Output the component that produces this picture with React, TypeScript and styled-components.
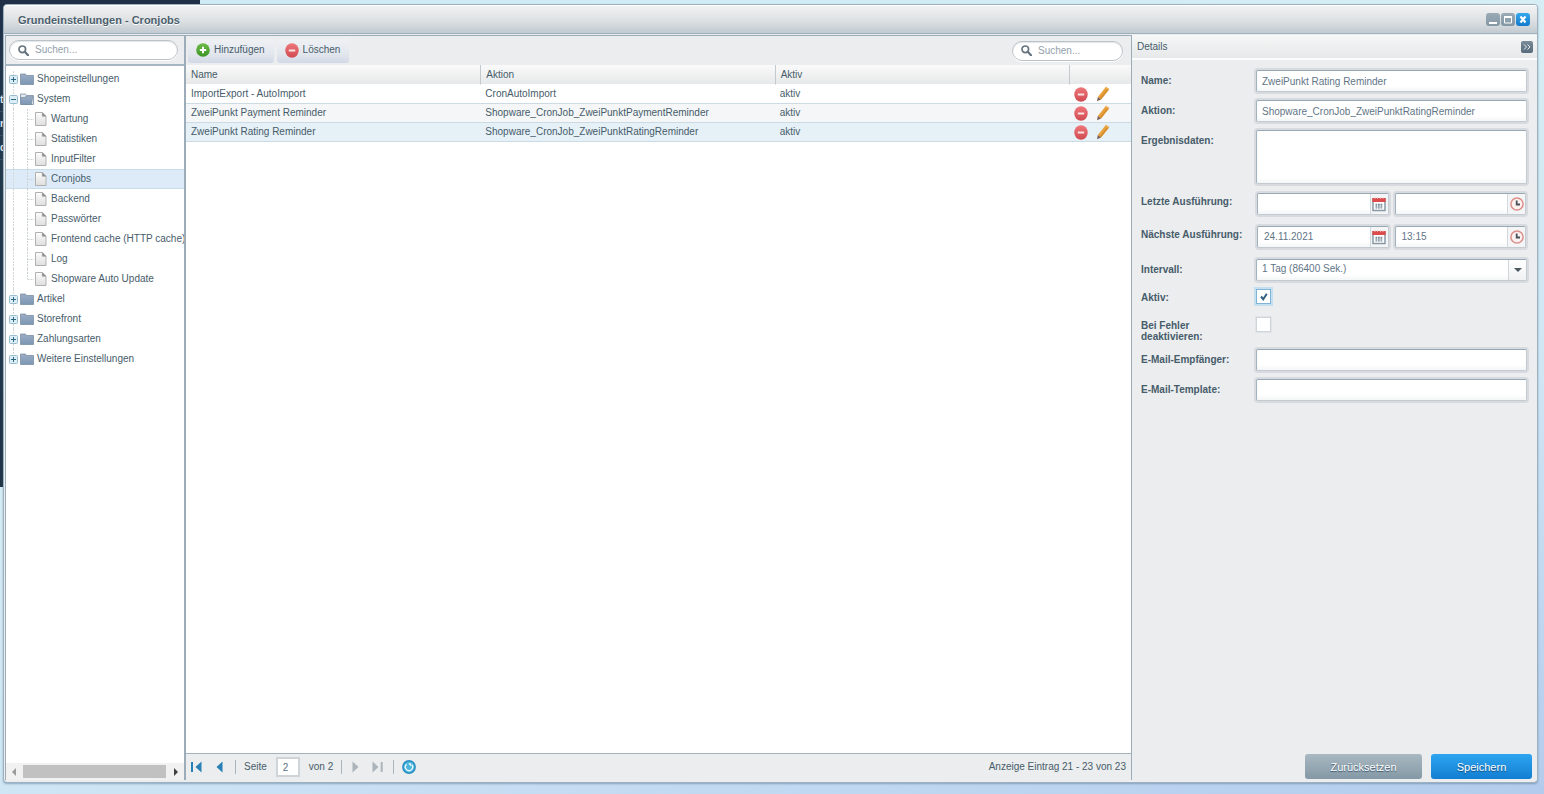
import React from 'react';
import styled, { createGlobalStyle, css } from 'styled-components';

const Global = createGlobalStyle`
  * { box-sizing: border-box; }
  html, body, #root { height: 100%; margin: 0; }
  body, button, input, select, textarea {
    font-family: "Liberation Sans", Arial, sans-serif;
    font-size: 10px;
    line-height: 12px;
    color: #475c6a;
  }
  button { border: 0; padding: 0; background: none; }
  svg { display: block; flex: none; }
`;

const Desktop = styled.div`
  position: relative;
  height: 100vh;
  padding: 4px 6px 11px 3px;
  overflow: hidden;
  background: linear-gradient(165deg, #cdeaf6 0%, #d6eef4 35%, #cfe6f5 65%, #b3cced 100%);
`;

const Backdrop = styled.div`
  position: absolute;
  top: 0;
  left: 0;
  width: 200px;
  height: 487px;
  padding-top: 88px;
  background: linear-gradient(#1e2f47, #22384c 30%, #1f3547);
`;

const BackdropItem = styled.div`
  width: 4px;
  height: 24px;
  overflow: hidden;
  border-bottom: 1px solid #3a4f62;
  font-weight: bold;
  line-height: 24px;
  color: #dfe7ee;
`;

const Window = styled.section`
  position: relative;
  display: flex;
  flex-direction: column;
  height: 100%;
  border: 1px solid #9cb0bf;
  border-radius: 4px;
  background: #ebedee;
  overflow: hidden;
  box-shadow: 0 1px 2px rgba(80, 110, 140, 0.5);
`;

const TitleBar = styled.header`
  display: flex;
  align-items: center;
  justify-content: space-between;
  flex: none;
  height: 29px;
  padding: 0 7px 0 14px;
  border-top: 1px solid #fff;
  border-bottom: 1px solid #9db0bd;
  background: linear-gradient(#f1f2f3, #dfe2e4 50%, #c2cbd1);
`;

const Title = styled.h1`
  margin: 0;
  font-size: 11px;
  line-height: 14px;
  color: #4c5f6c;
  text-shadow: 0 1px 0 #fff;
`;

const WindowTools = styled.div`
  display: flex;
  gap: 1px;
`;

const WindowButton = styled.button<{ $primary?: boolean }>`
  width: 14px;
  height: 13px;
  border-radius: 3px;
  background: ${(p) => (p.$primary ? 'linear-gradient(#35a8ec, #1279cc)' : 'linear-gradient(#9aabb7, #8497a4)')};
`;

const Body = styled.div`
  display: flex;
  flex: 1;
  min-height: 0;
  padding: 1px 0 2px 1px;
`;

const Sidebar = styled.aside`
  display: flex;
  flex-direction: column;
  flex: none;
  width: 181px;
  border: solid #9cadb9;
  border-width: 1px 2px 0 1px;
  background: #fff;
`;

const SidebarBar = styled.div`
  flex: none;
  height: 30px;
  padding: 4px 6px 0 3px;
  border-bottom: 2px solid #a5b7c3;
  background: #ebedee;
`;

const SearchBox = styled.label<{ $width?: number }>`
  display: flex;
  align-items: center;
  gap: 6px;
  width: ${(p) => (p.$width ? `${p.$width}px` : '100%')};
  height: 20px;
  padding: 0 8px;
  border: 1px solid #bcc3c8;
  border-radius: 10px;
  background: #fff;
  box-shadow: inset 0 1px 1px #e3e6e8, 0 1px 0 #fff;
`;

const SearchInput = styled.input`
  flex: 1;
  min-width: 0;
  padding: 0;
  border: 0;
  outline: 0;
  background: none;
  &::placeholder { color: #93a1ac; opacity: 1; }
`;

const Tree = styled.ul`
  flex: 1;
  min-height: 0;
  margin: 0;
  padding: 3px 0 0;
  list-style: none;
  overflow: hidden;
`;

const TreeRow = styled.li<{ $selected?: boolean }>`
  display: flex;
  align-items: center;
  height: 20px;
  padding-left: 2px;
  white-space: nowrap;
  ${(p) => p.$selected && css`
    background: #dcebf7;
    box-shadow: inset 0 1px 0 #c9dce9, inset 0 -1px 0 #c9dce9;
  `}
`;

const TreeText = styled.span`
  padding-left: 3px;
`;

const ScrollBar = styled.div`
  display: flex;
  align-items: center;
  justify-content: space-between;
  flex: none;
  height: 17px;
  padding: 0 5px;
  background: #f1f1f1;
`;

const ScrollThumb = styled.div`
  flex: 1;
  height: 13px;
  margin: 0 8px 0 7px;
  background: #c1c1c1;
`;

const Center = styled.main`
  display: flex;
  flex-direction: column;
  flex: 1;
  min-width: 0;
  border-top: 1px solid #9cadb9;
  background: #fff;
`;

const Toolbar = styled.div`
  display: flex;
  align-items: center;
  gap: 3px;
  flex: none;
  height: 29px;
  padding: 0 8px 0 2px;
  background: #ebedee;
`;

const ToolButton = styled.button`
  display: flex;
  align-items: center;
  gap: 4px;
  height: 24px;
  padding: 0 9px 1px 8px;
  border-radius: 3px;
  background: linear-gradient(#eff1f4, #e3e7ee 60%, #d2d9e6);
`;

const Spacer = styled.div`
  flex: 1;
`;

const Grid = styled.table`
  width: 100%;
  table-layout: fixed;
  border-collapse: separate;
  border-spacing: 0;
`;

const HeadCell = styled.th<{ $narrow?: boolean }>`
  height: 20px;
  width: ${(p) => (p.$narrow ? '62px' : 'auto')};
  padding: 1px 5px 0 5px;
  border-left: 1px solid #c3c9cd;
  border-bottom: 1px solid #fff;
  font-weight: normal;
  text-align: left;
  background: linear-gradient(#fafafa, #e7e8e9);
  &:first-child { border-left-color: transparent; padding-left: 4px; }
`;

const Cell = styled.td<{ $tone: string }>`
  height: 19px;
  padding: 0 5px;
  border-bottom: 1px solid #ccdae4;
  background: ${(p) => p.$tone};
`;

const RowActions = styled.div`
  display: flex;
  align-items: center;
  gap: 8px;
`;

const IconButton = styled.button`
  display: flex;
`;

const Pager = styled.footer`
  display: flex;
  align-items: center;
  flex: none;
  height: 27px;
  margin-top: auto;
  padding: 0 5px;
  border-top: 1px solid #a3b3be;
  background: #ebedee;
`;

const PagerGroup = styled.div<{ $gap: number }>`
  display: flex;
  align-items: center;
  gap: ${(p) => p.$gap}px;
  height: 14px;
  padding: 0 8px;
  border-left: 1px solid #a9b4bc;
  &:first-child { border-left: 0; padding: 0 12px 0 0; }
  &:nth-child(3) { padding: 0 10px; }
`;

const PageInput = styled.input`
  width: 24px;
  height: 20px;
  padding: 0 0 0 5px;
  border: 2px solid #cfd4d8;
  background: #fff;
  color: #5d7383;
`;

const Details = styled.aside`
  display: flex;
  flex-direction: column;
  flex: none;
  width: 406px;
  border-left: 1px solid #9cadb9;
  background: #ebedee;
`;

const DetailsHead = styled.div`
  display: flex;
  align-items: center;
  justify-content: space-between;
  flex: none;
  height: 25px;
  padding: 0 4px 0 5px;
  border-bottom: 2px solid #fbfcfc;
  background: linear-gradient(#f6f7f7, #e6e8e9);
`;

const DetailsTitle = styled.h2`
  margin: 0;
  font-size: 10px;
  font-weight: normal;
`;

const CollapseButton = styled.button`
  display: flex;
  align-items: center;
  justify-content: center;
  width: 12px;
  height: 12px;
  border-radius: 2px;
  background: linear-gradient(#7b8c99, #566b7b);
`;

const Form = styled.form`
  flex: 1;
  padding: 10px 10px 0 9px;
`;

const FormRow = styled.div<{ $height: number }>`
  display: grid;
  grid-template-columns: 115px 1fr;
  align-items: start;
  height: ${(p) => p.$height}px;
`;

const Label = styled.label<{ $compact?: boolean }>`
  padding-top: ${(p) => (p.$compact ? 3 : 5)}px;
  padding-right: 10px;
  font-weight: bold;
  line-height: 11px;
  white-space: pre-line;
`;

const field = css`
  border: 1px solid #c3cbd1;
  border-top-color: #98a9b5;
  border-left-color: #a3b3be;
  border-radius: 2px;
  background: #fff;
  box-shadow: 0 0 0 2px #d7dbdf, inset 0 -3px 3px #f5f7f8;
  color: #5f7586;
  outline: 0;
`;

const TextInput = styled.input`
  ${field}
  width: 100%;
  height: 22px;
  padding: 0 5px;
`;

const TextArea = styled.textarea`
  ${field}
  display: block;
  width: 100%;
  height: 54px;
  resize: none;
`;

const DateTime = styled.div`
  display: grid;
  grid-template-columns: 1fr 1fr;
  gap: 6px;
  padding: 0 1px;
`;

const Trigger = styled.div`
  ${field}
  display: flex;
  height: 22px;
  overflow: hidden;
`;

const TriggerInput = styled.input`
  flex: 1;
  min-width: 0;
  padding: 0 6px;
  border: 0;
  outline: 0;
  background: none;
  color: inherit;
`;

const TriggerButton = styled.button`
  display: flex;
  align-items: center;
  justify-content: center;
  width: 18px;
  border-left: 1px solid #d3d9dd;
  background: #f4f5f6;
`;

const SelectWrap = styled.div`
  position: relative;
`;

const Select = styled.select`
  ${field}
  appearance: none;
  display: block;
  width: 100%;
  height: 22px;
  padding: 0 24px 2px 5px;
`;

const SelectArrow = styled.span`
  position: absolute;
  top: 1px;
  right: 1px;
  display: flex;
  align-items: center;
  justify-content: center;
  width: 18px;
  height: 20px;
  border-left: 1px solid #cfd6da;
  background: linear-gradient(#fff, #eff1f2);
  pointer-events: none;
`;

const CheckWrap = styled.div`
  position: relative;
  width: 15px;
  height: 15px;
  svg {
    position: absolute;
    top: 4px;
    left: 4px;
    pointer-events: none;
  }
`;

const CheckInput = styled.input`
  appearance: none;
  display: block;
  width: 15px;
  height: 15px;
  margin: 0;
  border: 1px solid #cfd4d8;
  background: #fff;
  box-shadow: 0 0 0 1px #e1e4e6;
  &:checked {
    border-color: #80b3d6;
    box-shadow: 0 0 0 2px #c5def0;
  }
`;

const Actions = styled.div`
  display: flex;
  justify-content: flex-end;
  gap: 9px;
  padding: 0 5px 1px;
`;

const ActionButton = styled.button<{ $primary?: boolean }>`
  width: ${(p) => (p.$primary ? 101 : 117)}px;
  height: 25px;
  border-radius: 3px;
  font-size: 11px;
  color: #fff;
  text-shadow: 0 1px 1px rgba(20, 50, 80, 0.7);
  background: ${(p) => (p.$primary ? 'linear-gradient(#2ea5f0, #127ed2)' : 'linear-gradient(#a9b8c2, #8499a5)')};
`;

const SearchIcon = () => (
  <svg width="11" height="11" viewBox="0 0 11 11" fill="none" stroke="#66747f">
    <circle cx="4.3" cy="4.3" r="3.3" strokeWidth="1.7" />
    <path d="M6.8 6.8 10 10.2" strokeWidth="2.2" strokeLinecap="round" />
  </svg>
);

const AddIcon = () => (
  <svg width="14" height="14" viewBox="0 0 14 14">
    <defs><linearGradient id="add" x2="0" y2="1"><stop stopColor="#6cbb48" /><stop offset="1" stopColor="#3b9526" /></linearGradient></defs>
    <circle cx="7" cy="7" r="6.8" fill="url(#add)" />
    <path d="M7 3.8v6.4M3.8 7h6.4" stroke="#fff" strokeWidth="2" />
  </svg>
);

const RemoveIcon = () => (
  <svg width="14" height="15" viewBox="0 0 14 15">
    <defs><linearGradient id="remove" x2="0" y2="1"><stop stopColor="#ee777a" /><stop offset="1" stopColor="#d04a50" /></linearGradient></defs>
    <ellipse cx="7" cy="7.5" rx="6.7" ry="7.3" fill="url(#remove)" />
    <path d="M3.8 7.5h6.4" stroke="#fbe3e3" strokeWidth="2" />
  </svg>
);

const PencilIcon = () => (
  <svg width="14" height="16" viewBox="0 0 14 16">
    <path d="M10 .8 13.2 3.2 5 13.400 1.800 11Z" fill="#e9a23b" />
    <path d="M11.800 2.100 13.200 3.200 5 13.400 3.600 12.400Z" fill="#d78f30" />
    <path d="M1.800 11 5 13.400 1 15.300Z" fill="#765f57" />
    <path d="M10 .8 13.200 3.200 12.400 4.200 9.200 1.800Z" fill="#eeb45f" />
  </svg>
);

type Kind = 'first' | 'open' | 'node' | 'leaf' | 'last' | 'end';

const Lines = ({ kind }: { kind: Kind }) => {
  const child = kind === 'leaf' || kind === 'last';
  return (
    <svg width={child ? 26 : 12} height="20" viewBox={`0 0 ${child ? 26 : 12} 20`} fill="none">
      <path d={kind === 'first' ? 'M5.5 2V20' : kind === 'end' ? 'M5.5 0V10' : 'M5.5 0V20'} stroke="#d3d8db" strokeDasharray="2 1" />
      {child && <path d={`M19.5 0V${kind === 'last' ? 10 : 20}M19.5 10.5H26`} stroke="#cfd4d7" strokeDasharray="2 1" />}
      {!child && (
        <>
          <rect x="1.500" y="6.500" width="8" height="8" rx="1" fill="#dceef6" stroke="#97bccd" />
          <path d={kind === 'open' ? 'M3 10.500h5' : 'M3 10.500h5M5.500 8v5'} stroke="#2f6883" />
        </>
      )}
    </svg>
  );
};

const FolderIcon = ({ open }: { open?: boolean }) => (
  <svg width="14" height="12" viewBox="0 0 14 12">
    <defs><linearGradient id="folder" x2="0" y2="1"><stop stopColor="#9cadc5" /><stop offset="1" stopColor="#7c96b3" /></linearGradient></defs>
    <path d="M.5 1h5l1 1.500h7v9H.5Z" fill={open ? '#e3e8ed' : 'url(#folder)'} stroke="#7b8fa4" strokeWidth=".8" />
    {open && <path d="M0 4.500h4.500L6 3.200h6.800L11.400 11.600H1.300Z" fill="url(#folder)" stroke="#71869c" strokeWidth=".6" />}
  </svg>
);

const FileIcon = () => (
  <svg width="14" height="14" viewBox="0 0 14 14">
    <defs><linearGradient id="file" x2="0" y2="1"><stop stopColor="#fdfdfd" /><stop offset="1" stopColor="#dedede" /></linearGradient></defs>
    <path d="M1.500.500h7l3.500 3.700v9.300H1.500Z" fill="url(#file)" stroke="#b1b1b1" />
    <path d="M8.300.600v3.600H12" fill="#8f8f8f" stroke="#979797" strokeWidth=".7" />
  </svg>
);

const CalendarIcon = () => (
  <svg width="14" height="15" viewBox="0 0 14 15">
    <path d="M1 2h12v11.500H1Z" fill="#fff" stroke="#8999a4" strokeWidth="1.500" />
    <path d="M.3 1h13.400v4H.3Z" fill="#dc4c4c" />
    <path d="M3 0v2M5.700 0v2M8.400 0v2M11 0v2" stroke="#f3c9c8" strokeWidth=".8" />
    <path d="M3.500 7.500h7M3.500 9.200h7M3.500 10.900h7" stroke="#7a8c9a" strokeDasharray="1.800 .7" strokeWidth="1.300" />
  </svg>
);

const ClockIcon = () => (
  <svg width="14" height="14" viewBox="0 0 14 14" fill="none">
    <circle cx="7" cy="7" r="6.100" fill="#fdf1ef" stroke="#dc8f8b" strokeWidth="1.500" />
    <path d="M6.700 3.500v4H10" stroke="#45525c" strokeWidth="1.800" />
  </svg>
);

const RefreshIcon = () => (
  <svg width="14" height="14" viewBox="0 0 14 14" fill="none">
    <circle cx="7" cy="7" r="6.900" fill="#2a8fc2" />
    <circle cx="7" cy="7" r="5.400" fill="#4db5dc" />
    <path d="M4.600 4.300A3.600 3.600 0 1 0 9.800 4.700" stroke="#e6f8ff" strokeWidth="1.400" />
    <path d="M6.200 3.200h3v3.600Z" fill="#e6f8ff" />
  </svg>
);

const PageArrow = ({ back, edge, dim }: { back?: boolean; edge?: boolean; dim?: boolean }) => (
  <svg width={edge ? 11 : 7} height="12" viewBox={`0 0 ${edge ? 11 : 7} 12`} fill={dim ? '#abb4bb' : '#2980b5'}>
    {back ? (
      <>
        {edge && <path d="M0 1h2v10H0Z" />}
        <path d={edge ? 'M10.5.5v11L4.500 6Z' : 'M6.500.5v11L.5 6Z'} />
      </>
    ) : (
      <>
        <path d="M.5.5v11l6-5.500Z" />
        {edge && <path d="M8.700 1h2v10h-2Z" />}
      </>
    )}
  </svg>
);

const tree: { text: string; kind: Kind }[] = [
  { text: 'Shopeinstellungen', kind: 'first' },
  { text: 'System', kind: 'open' },
  { text: 'Wartung', kind: 'leaf' },
  { text: 'Statistiken', kind: 'leaf' },
  { text: 'InputFilter', kind: 'leaf' },
  { text: 'Cronjobs', kind: 'leaf' },
  { text: 'Backend', kind: 'leaf' },
  { text: 'Passwörter', kind: 'leaf' },
  { text: 'Frontend cache (HTTP cache)', kind: 'leaf' },
  { text: 'Log', kind: 'leaf' },
  { text: 'Shopware Auto Update', kind: 'last' },
  { text: 'Artikel', kind: 'node' },
  { text: 'Storefront', kind: 'node' },
  { text: 'Zahlungsarten', kind: 'node' },
  { text: 'Weitere Einstellungen', kind: 'end' },
];

const jobs = [
  { name: 'ImportExport - AutoImport', action: 'CronAutoImport', tone: '#ffffff' },
  { name: 'ZweiPunkt Payment Reminder', action: 'Shopware_CronJob_ZweiPunktPaymentReminder', tone: '#f4f6f7' },
  { name: 'ZweiPunkt Rating Reminder', action: 'Shopware_CronJob_ZweiPunktRatingReminder', tone: '#e6f0f7' },
];

const Search = ({ width, label }: { width?: number; label: string }) => (
  <SearchBox $width={width}>
    <SearchIcon />
    <SearchInput type="text" placeholder="Suchen..." aria-label={label} />
  </SearchBox>
);

const DateTimeRow = ({ id, label, date, time }: { id: string; label: string; date: string; time: string }) => (
  <FormRow $height={33}>
    <Label htmlFor={id} $compact>{label}</Label>
    <DateTime>
      <Trigger>
        <TriggerInput id={id} defaultValue={date} />
        <TriggerButton type="button" aria-label="Datum wählen"><CalendarIcon /></TriggerButton>
      </Trigger>
      <Trigger>
        <TriggerInput aria-label="Uhrzeit" defaultValue={time} />
        <TriggerButton type="button" aria-label="Uhrzeit wählen"><ClockIcon /></TriggerButton>
      </Trigger>
    </DateTime>
  </FormRow>
);

const TextRow = ({ id, label, value }: { id: string; label: string; value?: string }) => (
  <FormRow $height={30}>
    <Label htmlFor={id}>{label}</Label>
    <TextInput id={id} defaultValue={value} />
  </FormRow>
);

const CheckRow = ({ id, label, height, initial }: { id: string; label: string; height: number; initial: boolean }) => {
  const [on, setOn] = React.useState(initial);
  return (
    <FormRow $height={height}>
      <Label htmlFor={id} $compact>{label}</Label>
      <CheckWrap>
        <CheckInput id={id} type="checkbox" checked={on} onChange={() => setOn(!on)} />
        {on && (
          <svg width="8" height="8" viewBox="0 0 8 8" fill="none">
            <path d="M1 3.500 3.200 6.200 6.800 .8" stroke="#34617f" strokeWidth="2" />
          </svg>
        )}
      </CheckWrap>
    </FormRow>
  );
};

export default function App() {
  return (
    <Desktop>
      <Global />
      <Backdrop aria-hidden="true">
        <BackdropItem>t</BackdropItem>
        <BackdropItem>r</BackdropItem>
        <BackdropItem>d</BackdropItem>
      </Backdrop>
      <Window>
        <TitleBar>
          <Title>Grundeinstellungen - Cronjobs</Title>
          <WindowTools>
            <WindowButton aria-label="Minimieren">
              <svg width="14" height="13"><path d="M3 10h8" stroke="#fff" strokeWidth="2" /></svg>
            </WindowButton>
            <WindowButton aria-label="Maximieren">
              <svg width="14" height="13" fill="none"><path d="M3.500 4h7v6h-7Z" stroke="#fff" /><path d="M3 4h8" stroke="#fff" strokeWidth="2" /></svg>
            </WindowButton>
            <WindowButton $primary aria-label="Schließen">
              <svg width="14" height="13"><path d="M4.500 3.500 9.500 9.500M9.500 3.500 4.500 9.500" stroke="#fff" strokeWidth="2.200" /></svg>
            </WindowButton>
          </WindowTools>
        </TitleBar>
        <Body>
          <Sidebar>
            <SidebarBar><Search label="Einstellungen suchen" /></SidebarBar>
            <Tree>
              {tree.map((n) => (
                <TreeRow key={n.text} $selected={n.text === 'Cronjobs'}>
                  <Lines kind={n.kind} />
                  {n.kind === 'leaf' || n.kind === 'last' ? <FileIcon /> : <FolderIcon open={n.kind === 'open'} />}
                  <TreeText>{n.text}</TreeText>
                </TreeRow>
              ))}
            </Tree>
            <ScrollBar>
              <svg width="5" height="8"><path d="M5 0v8L1 4Z" fill="#9a9a9a" /></svg>
              <ScrollThumb />
              <svg width="5" height="8"><path d="M0 0v8l4-4Z" fill="#404040" /></svg>
            </ScrollBar>
          </Sidebar>
          <Center>
            <Toolbar>
              <ToolButton><AddIcon />Hinzufügen</ToolButton>
              <ToolButton><RemoveIcon />Löschen</ToolButton>
              <Spacer />
              <Search width={111} label="Cronjobs suchen" />
            </Toolbar>
            <Grid>
              <thead>
                <tr>
                  <HeadCell>Name</HeadCell>
                  <HeadCell>Aktion</HeadCell>
                  <HeadCell>Aktiv</HeadCell>
                  <HeadCell $narrow />
                </tr>
              </thead>
              <tbody>
                {jobs.map((j) => (
                  <tr key={j.name}>
                    <Cell $tone={j.tone}>{j.name}</Cell>
                    <Cell $tone={j.tone}>{j.action}</Cell>
                    <Cell $tone={j.tone}>aktiv</Cell>
                    <Cell $tone={j.tone}>
                      <RowActions>
                        <IconButton aria-label="Löschen"><RemoveIcon /></IconButton>
                        <IconButton aria-label="Bearbeiten"><PencilIcon /></IconButton>
                      </RowActions>
                    </Cell>
                  </tr>
                ))}
              </tbody>
            </Grid>
            <Pager>
              <PagerGroup $gap={14}>
                <IconButton aria-label="Erste Seite"><PageArrow back edge /></IconButton>
                <IconButton aria-label="Vorherige Seite"><PageArrow back /></IconButton>
              </PagerGroup>
              <PagerGroup $gap={9}>
                <label htmlFor="page">Seite</label>
                <PageInput id="page" defaultValue="2" />
                <span>von 2</span>
              </PagerGroup>
              <PagerGroup $gap={13}>
                <IconButton aria-label="Nächste Seite"><PageArrow dim /></IconButton>
                <IconButton aria-label="Letzte Seite"><PageArrow edge dim /></IconButton>
              </PagerGroup>
              <PagerGroup $gap={0}>
                <IconButton aria-label="Aktualisieren"><RefreshIcon /></IconButton>
              </PagerGroup>
              <Spacer />
              <span>Anzeige Eintrag 21 - 23 von 23</span>
            </Pager>
          </Center>
          <Details>
            <DetailsHead>
              <DetailsTitle>Details</DetailsTitle>
              <CollapseButton aria-label="Einklappen">
                <svg width="8" height="6" fill="none" stroke="#e4eaee"><path d="M1 .5 3.500 3 1 5.500M4.500 .5 7 3 4.500 5.500" /></svg>
              </CollapseButton>
            </DetailsHead>
            <Form>
              <TextRow id="name" label="Name:" value="ZweiPunkt Rating Reminder" />
              <TextRow id="action" label="Aktion:" value="Shopware_CronJob_ZweiPunktRatingReminder" />
              <FormRow $height={63}>
                <Label htmlFor="result">Ergebnisdaten:</Label>
                <TextArea id="result" />
              </FormRow>
              <DateTimeRow id="last" label="Letzte Ausführung:" date="" time="" />
              <DateTimeRow id="next" label="Nächste Ausführung:" date="24.11.2021" time="13:15" />
              <FormRow $height={30}>
                <Label htmlFor="interval">Intervall:</Label>
                <SelectWrap>
                  <Select id="interval"><option>1 Tag (86400 Sek.)</option></Select>
                  <SelectArrow><svg width="8" height="4"><path d="M0 0h8L4 4Z" fill="#4b5860" /></svg></SelectArrow>
                </SelectWrap>
              </FormRow>
              <CheckRow id="active" label="Aktiv:" height={28} initial />
              <CheckRow id="disable" label={'Bei Fehler\ndeaktivieren:'} height={32} initial={false} />
              <TextRow id="recipient" label="E-Mail-Empfänger:" />
              <TextRow id="template" label="E-Mail-Template:" />
            </Form>
            <Actions>
              <ActionButton>Zurücksetzen</ActionButton>
              <ActionButton $primary>Speichern</ActionButton>
            </Actions>
          </Details>
        </Body>
      </Window>
    </Desktop>
  );
}
